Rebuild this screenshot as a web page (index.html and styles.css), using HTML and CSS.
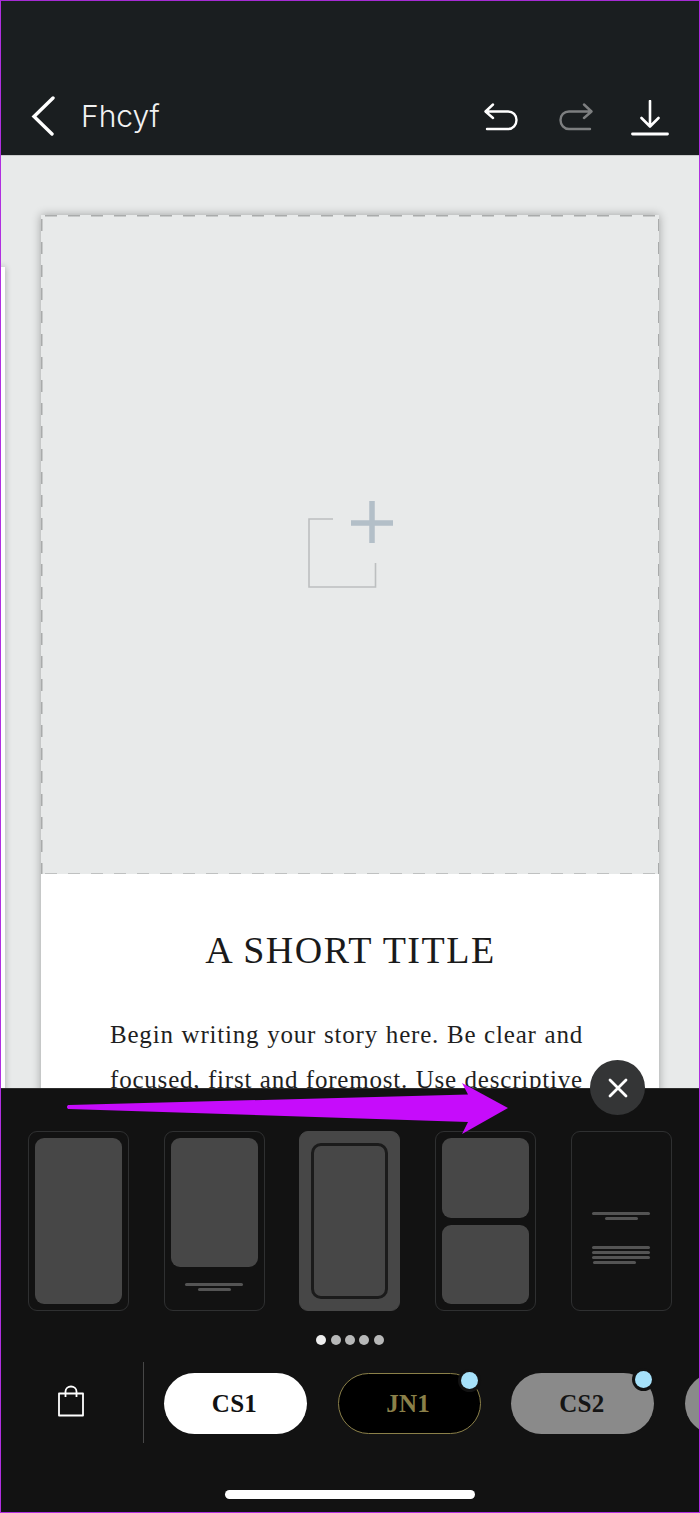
FILE: index.html
```html
<!DOCTYPE html>
<html lang="en">
<head>
<meta charset="utf-8">
<title>Fhcyf</title>
<link rel="stylesheet" href="styles.css">
</head>
<body>
<div class="screen">
  <header class="topbar">
    <div class="topbar-left">
      <svg class="ic-back" width="26" height="40" viewBox="0 0 26 40"><path d="M23 2 L4 20.5 L22 38" fill="none" stroke="#fff" stroke-width="3.4" stroke-linecap="round" stroke-linejoin="miter"/></svg>
      <span class="doc-name">Fhcyf</span>
    </div>
    <div class="topbar-right">
      <svg class="ic-undo" width="36" height="30" viewBox="0 0 36 30"><path d="M10 1.5 L2.5 8.5 L10 15 M3 8.5 H25 C30 8.500 33.500 12 33.500 17 C33.500 22 30 26 25 26 H4" fill="none" stroke="#fff" stroke-width="2.400" stroke-linecap="round" stroke-linejoin="round"/></svg>
      <svg width="36" height="30" viewBox="0 0 36 30"><path d="M26 1.500 L33.500 8.500 L26 15 M33 8.500 H11 C6 8.500 2.500 12 2.500 17 C2.500 22 6 26 11 26 H32" fill="none" stroke="#7d7f80" stroke-width="2.400" stroke-linecap="round" stroke-linejoin="round"/></svg>
      <svg width="38" height="36" viewBox="0 0 38 36"><path d="M19 1 V26 M10.500 18 L19 26.500 L27.500 18" fill="none" stroke="#fff" stroke-width="2.600" stroke-linecap="round" stroke-linejoin="round"/><path d="M1.500 34 H36.500" stroke="#fff" stroke-width="2.800" stroke-linecap="round"/></svg>
    </div>
  </header>

  <main class="canvas">
    <div class="peek"></div>
    <article class="card">
      <div class="photo-slot">
        <svg width="88" height="90" viewBox="0 0 88 90"><path d="M27 19 H3 V87 H69.500 V63" fill="none" stroke="#bcbfc0" stroke-width="1.600"/><path d="M66 1 V43 M45 23 H87" fill="none" stroke="#b3bfc8" stroke-width="5.500"/></svg>
      </div>
      <div class="story">
        <h1 class="story-title">A SHORT TITLE</h1>
        <p class="story-body">Begin writing your story here. Be clear and focused, first and foremost. Use descriptive</p>
      </div>
    </article>
  </main>

  <section class="sheet">
    <div class="thumbs">
      <div class="thumb"><div class="block grow"></div></div>
      <div class="thumb"><div class="block tall"></div><div class="lines caption"><i></i><i class="short"></i></div></div>
      <div class="thumb active"><div class="inset"></div></div>
      <div class="thumb split"><div class="block grow"></div><div class="block grow"></div></div>
      <div class="thumb text">
        <div class="lines"><i></i><i class="short"></i></div>
        <div class="lines para"><i></i><i></i><i></i><i class="part"></i></div>
      </div>
    </div>
    <div class="dots"><b class="on"></b><b></b><b></b><b></b><b></b></div>
    <div class="tools">
      <div class="shop">
        <svg width="28" height="32" viewBox="0 0 28 32"><path d="M2 8.500 H26 V30.500 H2 Z" fill="none" stroke="#fff" stroke-width="1.800" stroke-linejoin="round"/><path d="M8.500 12 V6.500 C8.500 3.500 11 1.500 14 1.500 C17 1.500 19.500 3.500 19.500 6.500 V12" fill="none" stroke="#fff" stroke-width="1.800"/></svg>
      </div>
      <div class="pills">
        <span class="pill white">CS1</span>
        <span class="pill black">JN1<em class="badge"></em></span>
        <span class="pill grey">CS2<em class="badge"></em></span>
        <span class="pill grey"></span>
      </div>
    </div>
    <div class="home-wrap"><div class="home"></div></div>
  </section>

  <button class="close" aria-label="Close">
    <svg width="20" height="20" viewBox="0 0 20 20"><path d="M2 2 L18 18 M18 2 L2 18" stroke="#fff" stroke-width="2.800" stroke-linecap="round"/></svg>
  </button>
  <svg class="arrow" width="450" height="60" viewBox="0 0 450 60"><path d="M2 25 C2 23.500 3 23 4 23 L403 12.500 L397 1 L443 26 L397 52 L403 40 L4 27 C3 27 2 26.500 2 25 Z" fill="#c60cfb"/></svg>
</div>
</body>
</html>
```

FILE: styles.css
```css
* { box-sizing: border-box; }
html, body { margin: 0; padding: 0; background: #121212; }
.screen {
  position: relative;
  width: 700px;
  height: 1513px;
  display: flex;
  flex-direction: column;
  overflow: hidden;
  border: 1px solid #b02fe0;
  border-top-color: #a52bd4;
}
.topbar {
  height: 155px;
  flex: none;
  background: #1a1e20;
  border-bottom: 1px solid #c9cbcb;
  display: flex;
  align-items: flex-end;
  justify-content: space-between;
  padding: 0 30px 19px 29px;
}
.topbar-left { display: flex; align-items: center; gap: 25px; }
.doc-name {
  font-family: Inter, "Liberation Sans", sans-serif;
  font-weight: 300;
  font-size: 30px;
  line-height: 40px;
  color: #f2f2f2;
}
.topbar-right { display: flex; align-items: center; gap: 37px; }
.ic-undo { margin-right: 2px; }
.canvas {
  flex: 1;
  min-height: 0;
  position: relative;
  background: #e8eaea;
  padding: 59px 40px 0 40px;
  overflow: hidden;
}
.peek {
  position: absolute;
  left: -1px;
  top: 111px;
  width: 5px;
  height: 900px;
  background: #fff;
  box-shadow: 0 0 6px rgba(0,0,0,.3);
}
.card {
  width: 618px;
  height: 900px;
  background: #fff;
  box-shadow: 0 0 9px rgba(0,0,0,.32);
}
.photo-slot {
  height: 659px;
  background:
    repeating-linear-gradient(90deg, #a9abab 0 12px, transparent 12px 23px) 4px 0 / 100% 1.500px no-repeat,
    repeating-linear-gradient(90deg, #bfc1c1 0 12px, transparent 12px 23px) 4px 100% / 100% 1.500px no-repeat,
    repeating-linear-gradient(180deg, #a9abab 0 12px, transparent 12px 23px) 0 4px / 1.500px 100% no-repeat,
    repeating-linear-gradient(180deg, #a9abab 0 12px, transparent 12px 23px) 100% 4px / 1.500px 100% no-repeat,
    #e8eaea;
  display: flex;
  align-items: center;
  justify-content: center;
}
.photo-slot svg { margin: 1px 0 0 0; }
.story { padding: 49px 76px 0 69px; text-align: center; }
.story-title {
  margin: 0 -8px 0 0;
  font-family: "Liberation Serif", serif;
  font-weight: 400;
  font-size: 38px;
  letter-spacing: 1.500px;
  line-height: 54px;
  color: #1a1a1a;
  white-space: nowrap;
}
.story-body {
  margin: 35px 0 0;
  font-family: "Liberation Serif", serif;
  font-size: 25px;
  letter-spacing: .8px;
  line-height: 45px;
  color: #1f1f1f;
  text-align: justify;
  text-align-last: justify;
}
.sheet {
  flex: none;
  height: 424px;
  background: #121212;
  padding: 42px 0 0 27px;
  border-top: 1px solid #2e2e2e;
}
.thumbs { display: flex; gap: 34.700px; }
.thumb {
  flex: none;
  width: 101px;
  height: 180px;
  border: 1px solid #2f3031;
  border-radius: 9px;
  padding: 6px;
  display: flex;
  flex-direction: column;
  gap: 7px;
}
.block { background: #474747; border-radius: 9px; }
.grow { flex: 1; }
.tall { height: 129px; flex: none; }
.lines { display: flex; flex-direction: column; align-items: center; gap: 2px; }
.lines i { display: block; width: 58px; height: 3px; background: #545454; border-radius: 2px; }
.lines i.short { width: 33px; }
.lines i.part { width: 43px; align-self: flex-start; margin-left: 15px; }
.caption { margin-top: 9px; }
.thumb.active { background: #474747; border-color: #474747; padding: 11px; }
.inset { flex: 1; border: 3px solid #1b1b1b; border-radius: 10px; }
.thumb.text { justify-content: center; gap: 26px; padding-top: 40px; }
.para { gap: 2px; }
.dots { display: flex; justify-content: center; gap: 4.400px; margin: 24px 0 0 -27px; height: 11px; }
.dots b { width: 10px; height: 10px; border-radius: 50%; background: #b7b8b8; }
.dots b.on { background: #eeeeee; }
.tools { display: flex; align-items: center; margin: 16px 0 0 -27px; height: 81px; overflow: hidden; }
.shop {
  flex: none;
  width: 143px;
  height: 81px;
  border-right: 1.500px solid #474747;
  display: flex;
  align-items: center;
  justify-content: center;
  padding: 0 2px 4px 0;
}
.pills { display: flex; gap: 30.700px; padding-left: 20px; padding-top: 2px; }
.pill {
  position: relative;
  flex: none;
  width: 143px;
  height: 61px;
  border-radius: 31px;
  display: flex;
  align-items: center;
  justify-content: center;
  font-family: "Liberation Serif", serif;
  font-weight: 700;
  font-size: 25px;
  letter-spacing: .3px;
  color: #111;
  padding-right: 2px;
}
.pill.white { background: #fff; }
.pill.black { background: #000; border: 1px solid #8b8049; color: #8b8049; }
.pill.grey { background: #8a8a8a; color: #151515; }
.badge {
  position: absolute;
  top: -2px;
  right: 2px;
  width: 17px;
  height: 17px;
  border-radius: 50%;
  background: #a6e1fa;
  box-shadow: 0 0 0 3px #121212;
}
.home-wrap { display: flex; justify-content: center; margin: 47px 0 0 -27px; }
.home { width: 250px; height: 9px; border-radius: 5px; background: #fff; }
.close {
  position: absolute;
  left: 589px;
  top: 1059px;
  width: 55px;
  height: 55px;
  border: 0;
  padding: 0;
  border-radius: 50%;
  background: #343536;
  display: flex;
  align-items: center;
  justify-content: center;
}
.arrow { position: absolute; left: 64px; top: 1081px; }
```
